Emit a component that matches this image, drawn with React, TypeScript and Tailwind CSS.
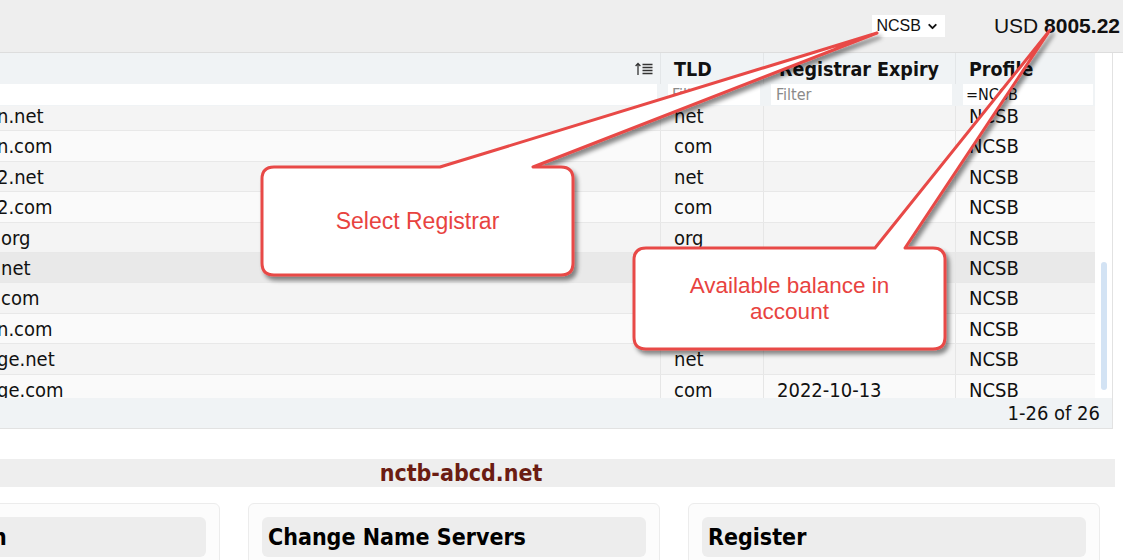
import React from "react";
import { ChevronDown } from "lucide-react";

const rows = [
  { domain: "n.net", tld: "net", expiry: "", shift: true },
  { domain: "n.com", tld: "com", expiry: "", shift: true },
  { domain: "2.net", tld: "net", expiry: "", shift: true },
  { domain: "2.com", tld: "com", expiry: "", shift: true },
  { domain: "org", tld: "org", expiry: "", shift: false },
  { domain: "net", tld: "net", expiry: "", shift: false },
  { domain: "com", tld: "com", expiry: "", shift: false },
  { domain: "n.com", tld: "com", expiry: "", shift: true },
  { domain: "ge.net", tld: "net", expiry: "", shift: true },
  { domain: "ge.com", tld: "com", expiry: "2022-10-13", shift: true },
];

const cards = ["Renew Domain", "Change Name Servers", "Register"];

const SortIcon = () => (
  <svg width="20" height="14" viewBox="0 0 20 14" fill="none" stroke="#333" strokeWidth="1.3">
    <path d="M4 13V1.5M1.6 4L4 1.5 6.4 4" />
    <path d="M8.5 2.5h10M8.5 5.5h10M8.5 8.5h10M8.5 11.5h10" />
  </svg>
);

// callout bubbles drawn over the grid
const Callouts = () => (
  <>
    <svg className="absolute left-0 top-0 pointer-events-none" width="1123" height="560">
      <defs>
        <filter id="sh" x="-10%" y="-10%" width="130%" height="140%">
          <feDropShadow dx="3" dy="4" stdDeviation="2" floodColor="#000" floodOpacity="0.45" />
        </filter>
      </defs>
      <path
        d="M274,167 L440,167 L877,33 L533,167 L561,167 Q573,167 573,179 L573,263 Q573,275 561,275 L274,275 Q262,275 262,263 L262,179 Q262,167 274,167 Z"
        fill="#fff"
        stroke="#e84a47"
        strokeWidth="3"
        strokeLinejoin="round"
        filter="url(#sh)"
      />
      <path
        d="M646,248 L875,248 L1050,30 L905,248 L933,248 Q945,248 945,260 L945,337 Q945,349 933,349 L646,349 Q634,349 634,337 L634,260 Q634,248 646,248 Z"
        fill="#fff"
        stroke="#e84a47"
        strokeWidth="3"
        strokeLinejoin="round"
        filter="url(#sh)"
      />
    </svg>
    <div className="absolute left-[262px] top-[167px] w-[311px] h-[108px] flex items-center justify-center text-[23px] text-[#e8433f] font-['Liberation_Sans',Arial,sans-serif]">
      Select Registrar
    </div>
    <div className="absolute left-[634px] top-[248px] w-[311px] h-[101px] flex flex-col items-center justify-center text-[22.5px] leading-[26px] text-[#e8433f] font-['Liberation_Sans',Arial,sans-serif]">
      <span>Available balance in</span>
      <span>account</span>
    </div>
  </>
);

export default function App() {
  return (
    <div className="relative w-[1123px] h-[560px] overflow-hidden bg-white text-[#111] font-['DejaVu_Sans_Condensed','DejaVu_Sans',sans-serif]">
      {/* top bar */}
      <div className="h-[53px] bg-[#eeeeee] border-b border-[#dddddd] flex items-center justify-end pr-[3px] font-['Liberation_Sans',Arial,sans-serif]">
        <div className="flex items-center gap-[5px] bg-white h-[22px] pl-[4px] pr-[6px] text-[16px]">
          NCSB
          <ChevronDown size={13} strokeWidth={3.5} />
        </div>
        <div className="ml-[49px] text-[21px]">
          USD <span className="font-bold">8005.22</span>
        </div>
      </div>

      <div className="-ml-[193px] w-[1308px]">
        {/* domain grid */}
        <div className="w-[1306px] border-r border-b border-[#e2e2e2]">
          <div className="flex">
            <div className="w-[1288px]">
              <div className="flex h-[31px] bg-[#f0f3f5] text-[19.5px] font-bold">
                <div className="w-[853px] flex items-center justify-end pr-[6px]">
                  <SortIcon />
                </div>
                <div className="w-[103px] border-l border-[#e3e6e8] pl-[13px] pt-[2px]">TLD</div>
                <div className="w-[192px] border-l border-[#e3e6e8] pl-[15px] pt-[2px]">Registrar Expiry</div>
                <div className="w-[140px] border-l border-[#e3e6e8] pl-[13px] pt-[2px]">Profile</div>
              </div>
              <div className="flex h-[22px] bg-[#f0f3f5] text-[16px] leading-[21px]">
                <div className="w-[853px] pr-[3px]">
                  <div className="h-[21px] bg-white" />
                </div>
                <div className="w-[103px] pl-[8px] pr-[3px]">
                  <div className="h-[21px] bg-white pl-[4px] text-[#8a8a8a]">Filter</div>
                </div>
                <div className="w-[192px] pl-[8px] pr-[3px]">
                  <div className="h-[21px] bg-white pl-[5px] text-[#8a8a8a]">Filter</div>
                </div>
                <div className="w-[140px] pl-[8px] pr-[2px]">
                  <div className="h-[21px] bg-white pl-[3px]">=NCSB</div>
                </div>
              </div>
              <div className="h-[292px] overflow-hidden">
                <div className="-mt-[5px]">
                  {rows.map((r, i) => (
                    <div
                      key={i}
                      className={`flex h-[30.4px] border-b border-[#e8e8e8] text-[20px] leading-[30px] ${
                        i === 5 ? "bg-[#e9e9e9]" : i % 2 === 0 ? "bg-[#f4f4f4]" : "bg-[#fafafa]"
                      }`}
                    >
                      <div className={`w-[853px] ${r.shift ? "pl-[190px]" : "pl-[194px]"}`}>{r.domain}</div>
                      <div className="w-[103px] border-l border-[#e6e6e6] pl-[13px]">{r.tld}</div>
                      <div className="w-[192px] border-l border-[#e6e6e6] pl-[13px]">{r.expiry}</div>
                      <div className="w-[140px] border-l border-[#e6e6e6] pl-[13px]">NCSB</div>
                    </div>
                  ))}
                </div>
              </div>
            </div>
            <div className="w-[18px] bg-white">
              <div className="mt-[209px] ml-[6px] w-[6px] h-[128px] rounded-full bg-[#d3e3f4]" />
            </div>
          </div>
          <div className="h-[30px] bg-[#f0f3f5] flex items-center justify-end pr-[12px] text-[20px]">
            1-26 of 26
          </div>
        </div>

        {/* selected domain */}
        <div className="mt-[30px] h-[28px] bg-[#eeeeee] flex items-center justify-center text-[23px] font-bold text-[#6b1c12]">
          nctb-abcd.net
        </div>

        <div className="mt-[16px] ml-[1px] w-[1292px] grid grid-cols-3 gap-[28px]">
          {cards.map((c, i) => (
            <div key={c} className="h-[100px] rounded-md border border-[#ececec] bg-[#fcfcfc] p-[13px]">
              <div
                className={`h-[40px] rounded-md bg-[#ededed] flex items-center pr-[6px] text-[23px] font-bold text-black ${
                  i === 0 ? "pl-[11px]" : "pl-[6px]"
                }`}
              >
                {c}
              </div>
            </div>
          ))}
        </div>
      </div>

      <Callouts />
    </div>
  );
}
